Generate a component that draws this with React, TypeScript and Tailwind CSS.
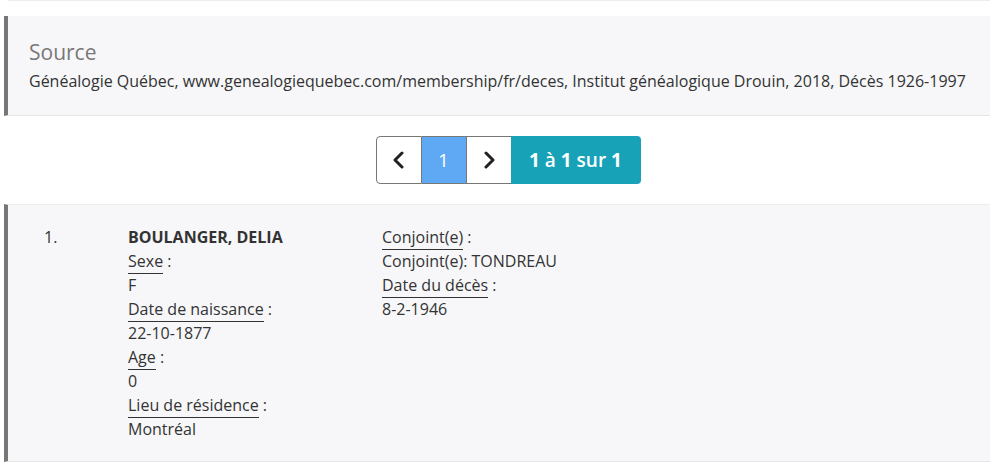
import React from "react";

const Label = ({ children }: { children: React.ReactNode }) => (
  <div>
    <span className="border-b border-[#333] pb-px">{children}</span> :
  </div>
);

export default function App() {
  return (
    <div className="w-[990px] h-[464px] bg-white text-[#333] overflow-hidden" style={{ fontFamily: '"Open Sans", sans-serif' }}>
      <div className="h-px bg-[#ececec] ml-[8px]" />
      <div className="mt-[15px] ml-[4px] border-l-[4px] border-[#777] bg-[#f7f7f9] border-b border-b-[#e6e6e6] h-[100px] pl-[21px] pt-[23px]">
        <div className="text-[21px] leading-[26px] text-[#777]">Source</div>
        <div className="text-[16px] leading-[22px] mt-[5px]">
          Généalogie Québec, www.genealogiequebec.com/membership/fr/deces, Institut généalogique Drouin, 2018, Décès 1926-1997
        </div>
      </div>
      <div className="flex justify-center mt-[20px]">
        <div className="flex h-[48px] ml-[26px]">
          <div className="w-[46px] flex items-center justify-center border border-[#777] rounded-l-[4px] bg-white">
            <svg width="14" height="18" viewBox="0 0 14 18"><path d="M10 2 L3 9 L10 16" fill="none" stroke="#222" strokeWidth="3" strokeLinecap="round" strokeLinejoin="round" /></svg>
          </div>
          <div className="w-[44px] flex items-center justify-center bg-[#5fa8f4] border-y border-[#777] text-white text-[19px]">1</div>
          <div className="w-[46px] flex items-center justify-center border-y border-r border-l border-[#777] bg-white">
            <svg width="14" height="18" viewBox="0 0 14 18"><path d="M4 2 L11 9 L4 16" fill="none" stroke="#222" strokeWidth="3" strokeLinecap="round" strokeLinejoin="round" /></svg>
          </div>
          <div className="w-[130px] -ml-px flex items-center justify-center bg-[#17a2b8] rounded-r-[4px] text-white text-[19px] font-semibold">
            <b className="font-bold">1</b>&nbsp;à&nbsp;<b className="font-bold">1</b>&nbsp;sur&nbsp;<b className="font-bold">1</b>
          </div>
        </div>
      </div>
      <div className="mt-[20px] ml-[4px] border-l-[4px] border-[#777] bg-[#f7f7f9] border-t border-t-[#ececec] border-b border-b-[#e6e6e6] h-[258px] pt-[20px] text-[16px] leading-[24px]">
        <div className="flex">
          <div className="w-[120px] pl-[36px]">1.</div>
          <div className="w-[254px]">
            <div className="font-bold">BOULANGER, DELIA</div>
            <Label>Sexe</Label>
            <div>F</div>
            <Label>Date de naissance</Label>
            <div>22-10-1877</div>
            <Label>Age</Label>
            <div>0</div>
            <Label>Lieu de résidence</Label>
            <div>Montréal</div>
          </div>
          <div>
            <Label>Conjoint(e)</Label>
            <div>Conjoint(e): TONDREAU</div>
            <Label>Date du décès</Label>
            <div>8-2-1946</div>
          </div>
        </div>
      </div>
    </div>
  );
}
